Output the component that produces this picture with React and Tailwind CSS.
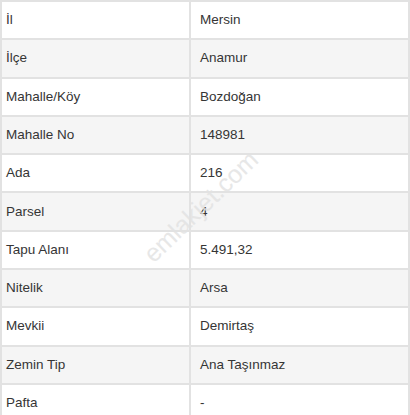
import React from "react";

const rows = [
  ["İl", "Mersin"],
  ["İlçe", "Anamur"],
  ["Mahalle/Köy", "Bozdoğan"],
  ["Mahalle No", "148981"],
  ["Ada", "216"],
  ["Parsel", "4"],
  ["Tapu Alanı", "5.491,32"],
  ["Nitelik", "Arsa"],
  ["Mevkii", "Demirtaş"],
  ["Zemin Tip", "Ana Taşınmaz"],
  ["Pafta", "-"],
];

export default function App() {
  return (
    <div
      className="relative w-[410px] h-[415px] overflow-hidden bg-white text-[#353535] text-[13.5px]"
      style={{ fontFamily: '"Liberation Sans", Arial, sans-serif' }}
    >
      <div className="border-t-2 border-l-2 border-r-2 border-[#e2e2e2]">
        {rows.map(([k, v], i) => (
          <div
            key={k}
            className={`grid grid-cols-[189px_1fr] h-[38.3px] border-b-2 border-[#e2e2e2] ${
              i % 2 === 1 ? "bg-[#f5f5f5]" : "bg-white"
            }`}
          >
            <div className="flex items-center pl-[4px] border-r-2 border-[#e2e2e2]">{k}</div>
            <div className="flex items-center pl-[9px]">{v}</div>
          </div>
        ))}
      </div>
      <div
        className="absolute left-[126px] top-[188px] w-[150px] text-center text-[25px] text-[#e2e2e2] opacity-80 -rotate-[44deg] pointer-events-none"
        style={{ fontFamily: '"Liberation Sans", Arial, sans-serif' }}
      >
        emlakjet.com
      </div>
    </div>
  );
}
